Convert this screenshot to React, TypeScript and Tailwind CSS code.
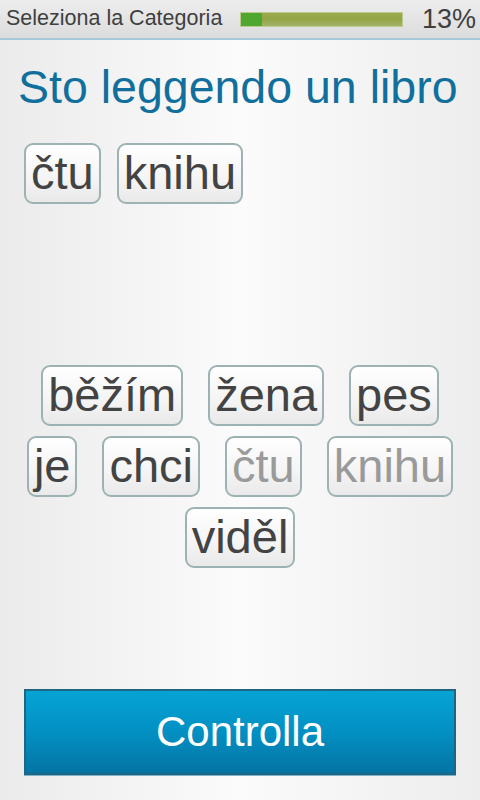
const font = { fontFamily: '"Liberation Sans", Arial, sans-serif' };

function Tile({ word, faded }: { word: string; faded?: boolean }) {
  return (
    <div
      className={
        "h-[61px] box-border rounded-[9px] border-2 border-[#9db3b3] bg-[linear-gradient(to_bottom,#ffffff,#f4f4f4_60%,#e9e9e9)] px-[5px] pt-[4px] pb-[6px] text-[47px] leading-none whitespace-nowrap " +
        (faded ? "text-[#9a9a9a]" : "text-[#434343]")
      }
    >
      {word}
    </div>
  );
}

export default function App() {
  const picked = ["čtu", "knihu"];
  const pool = [
    { w: "běžím" },
    { w: "žena" },
    { w: "pes" },
    { w: "je" },
    { w: "chci" },
    { w: "čtu", faded: true },
    { w: "knihu", faded: true },
    { w: "viděl" },
  ];

  return (
    <div className="w-[480px] h-[800px] flex flex-col overflow-hidden" style={font}>
      <div className="h-[40px] shrink-0 flex items-center border-b-2 border-[#a6c9da] bg-[linear-gradient(to_bottom,#ededed,#dcdcdc)] pl-[6px] pr-[4px]">
        <span className="w-[234px] text-[21.5px] leading-none text-[#3f3f3f] whitespace-nowrap">Seleziona la Categoria</span>
        <div className="w-[163px] h-[15px] flex border border-[#bccb8e] bg-[linear-gradient(to_bottom,#9aab4e,#93a547_50%,#a3b36a)]">
          <div className="w-[21px] h-full bg-[#4fa72f]" />
        </div>
        <span className="ml-auto text-[27px] leading-none text-[#3f3f3f]">13%</span>
      </div>

      <div className="flex-1 flex flex-col bg-[linear-gradient(to_right,#ebebeb,#fbfbfb_50%,#ededed)]">
        <h1 className="pt-[24px] pl-[18px] text-[46.5px] leading-none text-[#116f9d] whitespace-nowrap">
          Sto leggendo un libro
        </h1>

        <div className="mt-[32px] pl-[24px] flex gap-[16px]">
          {picked.map((w, i) => (
            <Tile key={i} word={w} />
          ))}
        </div>

        <div className="mt-[161px] mx-auto w-[440px] flex flex-wrap justify-center gap-x-[25px] gap-y-[10px]">
          {pool.map((p, i) => (
            <Tile key={i} word={p.w} faded={p.faded} />
          ))}
        </div>

        <button className="mt-auto mb-[25px] mx-[24px] h-[86px] border-2 border-[#1f6683] bg-[linear-gradient(to_bottom,#05a4d5,#0390c3_50%,#0474a3)] shadow-[0_1px_0_#7fb2c8] text-white text-[42px] leading-none">
          Controlla
        </button>
      </div>
    </div>
  );
}
